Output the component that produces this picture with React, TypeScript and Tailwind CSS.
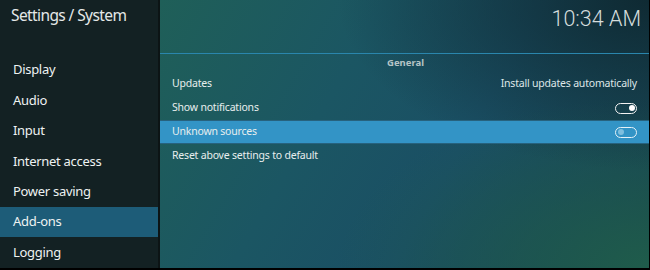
import { ReactNode } from 'react';

const MENU = ['Display', 'Audio', 'Input', 'Internet access', 'Power saving', 'Add-ons', 'Logging'];

function Toggle({ on }: { on: boolean }) {
  return (
    <div
      className={`flex h-[11px] w-[22px] items-center rounded-full border-[1.5px] px-[1.5px] ${
        on ? 'justify-end border-[#f2f2f2]' : 'justify-start border-[#e6f2f8]'
      }`}
    >
      <div className={`h-[6px] w-[6px] rounded-full ${on ? 'bg-white' : 'bg-[#7fbfdf]'}`} />
    </div>
  );
}

function Row({ label, right, active }: { label: string; right?: ReactNode; active?: boolean }) {
  return (
    <div
      className={`flex h-6 items-center justify-between pl-[12px] pr-[12px] ${
        active ? 'border-y border-[#27627e] bg-[#3394c6]' : ''
      }`}
    >
      <span className="text-[10.5px] tracking-[-0.2px] text-[#e8eeee]">{label}</span>
      {right}
    </div>
  );
}

export default function App() {
  return (
    <div
      className="flex h-[270px] w-[650px] overflow-hidden border-r border-b-2 border-black"
      style={{ fontFamily: '"Noto Sans", "Open Sans", sans-serif' }}
    >
      {/* sidebar */}
      <div className="flex w-[160px] shrink-0 flex-col border-r-2 border-[#0c1415] bg-[#132123]">
        <div className="h-[55px] pl-[11px] pt-[4px] text-[15.5px] tracking-[-0.6px] text-[#e4e8e8]">
          Settings / System
        </div>
        {MENU.map((m) => (
          <div
            key={m}
            className={`flex h-[30.4px] items-center pl-[13px] text-[13px] tracking-[-0.3px] text-[#eef2f2] ${
              m === 'Add-ons' ? 'bg-[#1d5c78]' : ''
            }`}
          >
            {m}
          </div>
        ))}
      </div>

      {/* main */}
      <div className="flex flex-1 flex-col bg-[radial-gradient(ellipse_at_100%_0%,#0f2a33_0%,transparent_45%),radial-gradient(ellipse_at_100%_100%,#1f5c4b_0%,transparent_45%),linear-gradient(120deg,#1f5f58_0%,#1b5663_35%,#1a4f64_60%,#17434f_100%)]">
        <div className="flex h-[54px] items-start justify-end border-b border-[#2a86ad] pr-[8px] pt-[3px]">
          <span
            className="text-[21.5px] font-light text-[#d4dcdc]"
            style={{ fontFamily: 'Roboto, "Noto Sans", sans-serif' }}
          >
            10:34 AM
          </span>
        </div>
        <div className="flex h-[18px] items-center justify-center pl-[2px] text-[9.5px] font-bold text-[#b5c4c6]">
          General
        </div>
        <Row
          label="Updates"
          right={<span className="text-[10.5px] tracking-[-0.2px] text-[#dfe7e8]">Install updates automatically</span>}
        />
        <Row label="Show notifications" right={<Toggle on />} />
        <Row label="Unknown sources" right={<Toggle on={false} />} active />
        <Row label="Reset above settings to default" />
      </div>
    </div>
  );
}
